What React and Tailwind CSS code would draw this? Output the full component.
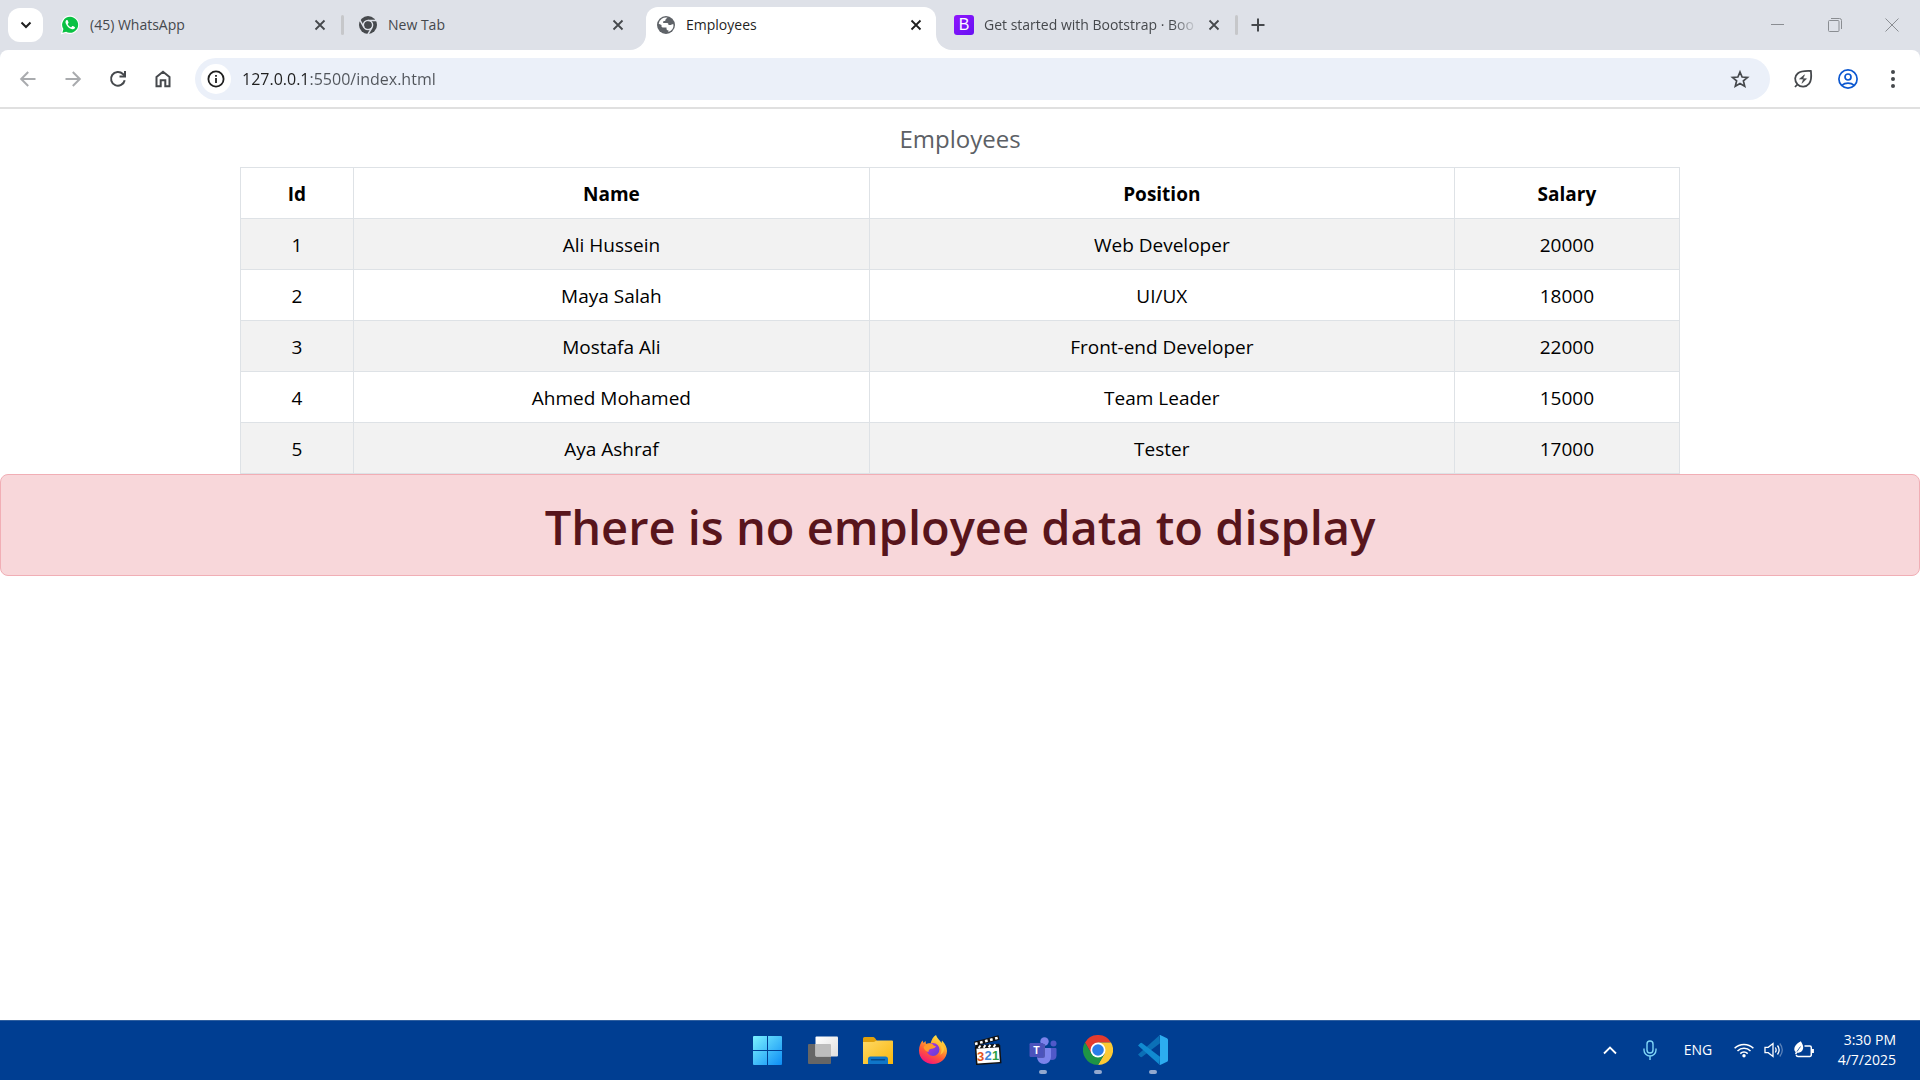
import React from "react";

const employees = [
  { id: 1, name: "Ali Hussein", position: "Web Developer", salary: 20000 },
  { id: 2, name: "Maya Salah", position: "UI/UX", salary: 18000 },
  { id: 3, name: "Mostafa Ali", position: "Front-end Developer", salary: 22000 },
  { id: 4, name: "Ahmed Mohamed", position: "Team Leader", salary: 15000 },
  { id: 5, name: "Aya Ashraf", position: "Tester", salary: 17000 },
];

/* ---------- Tab icons ---------- */

function WhatsAppIcon() {
  return (
    <svg viewBox="0 0 20 20" className="size-5" aria-hidden="true">
      <path d="M10.2 .6a9.2 9.2 0 0 0-8 13.8L.7 19.4l5-1.4A9.2 9.2 0 1 0 10.2 .6z" fill="#fff" />
      <path d="M10.2 1.8a8 8 0 0 0-6.8 12.3l-1 3.6 3.7-1A8 8 0 1 0 10.2 1.8z" fill="#0ac143" />
      <path
        d="M7.6 5.3c-.2-.4-.7-.5-1.1-.2-1 .8-1.3 2-.7 3.4 1 2.6 3 4.600 5.700 5.600 1.400.5 2.700.2 3.300-.8.3-.5.3-1.100-.1-1.300l-1.700-.9c-.4-.2-.7-.1-.9.2l-.6.8c-.2.2-.4.2-.7.1-1.300-.6-2.300-1.500-3-2.800-.1-.3-.1-.5.1-.7l.5-.6c.2-.3.2-.5.1-.8z"
        fill="#fff"
      />
    </svg>
  );
}

function ChromeMonoIcon() {
  return (
    <svg viewBox="0 0 20 20" className="size-5" aria-hidden="true">
      <circle cx="10" cy="10" r="9" fill="#46494d" />
      <circle cx="10" cy="10" r="4.600" fill="none" stroke="#dee1e8" strokeWidth="1.500" />
      <path d="M10 5.400h8.200M6 12.300L1.900 5.200M14 12.300l-4.100 7.100" stroke="#dee1e8" strokeWidth="1.500" fill="none" />
      <circle cx="10" cy="10" r="3.400" fill="#46494d" />
    </svg>
  );
}

function GlobeIcon() {
  return (
    <svg viewBox="0 0 20 20" className="size-5" aria-hidden="true">
      <circle cx="10" cy="10" r="9" fill="#5f6368" />
      <path
        d="M11.500 2.600c-.9 1-2 1.300-2 2.500 0 .9-.8 1.100-1.800 1.200-.9.1-.9 1.200-.2 1.700h3.700c1 0 1.300.9 1.300 1.900h2.300c.9 0 1.200-.9 2.700-.4a7.400 7.400 0 0 1-5.100 7.500v-1.700c-1.300 0-1.900-.6-1.900-1.900v-.9H6.700c-.8 0-1.200-.5-1.200-1.200V10L2.700 8.700A7.400 7.400 0 0 1 11.500 2.600z"
        fill="#fff"
      />
      <path d="M11.800 2.800c.7 2-.2 3.500 1.500 3.700 1.200.1 1 1.400 2.500 1.500l1.100-.5A7.400 7.400 0 0 0 11.800 2.800z" fill="#5f6368" />
    </svg>
  );
}

function BootstrapIcon() {
  return (
    <span
      aria-hidden="true"
      className="flex size-5 items-center justify-center rounded-[3px] bg-linear-to-br from-[#9013fe] to-[#6610f2] font-['Liberation_Sans'] text-base leading-5 text-white"
    >
      B
    </span>
  );
}

function CrossIcon() {
  return (
    <svg viewBox="0 0 12 12" className="size-3" aria-hidden="true">
      <path d="M1.500 1.500l9 9M10.500 1.500l-9 9" stroke="currentColor" strokeWidth="1.800" />
    </svg>
  );
}

/* ---------- Browser chrome ---------- */

function Tab({ icon, title, active, divider }) {
  return (
    <div className="relative flex h-full w-[298px] min-w-0 items-center">
      {active && (
        <div className="absolute inset-x-1 top-[7px] bottom-0 rounded-t-xl bg-white">
          <span className="absolute bottom-0 -left-4 size-4 bg-white">
            <span className="block size-full rounded-br-2xl bg-[#dee1e8]" />
          </span>
          <span className="absolute -right-4 bottom-0 size-4 bg-white">
            <span className="block size-full rounded-bl-2xl bg-[#dee1e8]" />
          </span>
        </div>
      )}
      <div className="relative flex w-full items-center pr-3 pl-[14px]">
        <span className="mr-[10px] shrink-0">{icon}</span>
        <span
          className={
            "min-w-0 flex-1 overflow-hidden whitespace-nowrap text-sm leading-5 " +
            (divider === "fade"
              ? "mask-[linear-gradient(90deg,#000_88%,transparent)] text-[#45484c]"
              : active
                ? "text-[#1f1f1f]"
                : "text-[#45484c]")
          }
        >
          {title}
        </span>
        <button
          type="button"
          aria-label={"Close " + title}
          className={"ml-1 flex size-6 shrink-0 items-center justify-center " + (active ? "text-[#1f1f1f]" : "text-[#45484c]")}
        >
          <CrossIcon />
        </button>
      </div>
      {divider && <span className="absolute top-[15px] right-0 h-5 w-[3px] rounded-full bg-[#c6c7ca]" />}
    </div>
  );
}

function TabStrip() {
  return (
    <div className="flex h-[50px] bg-[#dee1e8]">
      <button
        type="button"
        aria-label="Search tabs"
        className="mt-2 mr-[3px] ml-2 flex h-[34px] w-[35px] shrink-0 items-center justify-center rounded-xl bg-white text-[#1f1f1f]"
      >
        <svg viewBox="0 0 12 8" className="h-2 w-3" aria-hidden="true">
          <path d="M1.500 1.500L6 6l4.500-4.500" fill="none" stroke="currentColor" strokeWidth="2" />
        </svg>
      </button>
      <Tab icon={<WhatsAppIcon />} title="(45) WhatsApp" divider="line" />
      <Tab icon={<ChromeMonoIcon />} title="New Tab" />
      <Tab icon={<GlobeIcon />} title="Employees" active />
      <Tab icon={<BootstrapIcon />} title="Get started with Bootstrap · Boo" divider="fade" />
      <button type="button" aria-label="New tab" className="ml-[6px] flex w-7 shrink-0 items-center justify-center text-[#45484c]">
        <svg viewBox="0 0 14 14" className="size-[14px]" aria-hidden="true">
          <path d="M7 .5v13M.5 7h13" stroke="currentColor" strokeWidth="2" />
        </svg>
      </button>
      <div className="ml-auto flex items-center text-[#8a8d92]">
        <button type="button" aria-label="Minimize" className="flex h-12 w-[57px] items-center justify-center">
          <svg viewBox="0 0 14 14" className="size-[14px]" aria-hidden="true">
            <path d="M0 6.500h13" stroke="currentColor" />
          </svg>
        </button>
        <button type="button" aria-label="Restore" className="flex h-12 w-[57px] items-center justify-center">
          <svg viewBox="0 0 14 14" className="size-[14px]" aria-hidden="true">
            <rect x=".5" y="2.500" width="10.500" height="11" rx="1" fill="none" stroke="currentColor" />
            <path d="M3 .5h8.500a2 2 0 0 1 2 2V11" fill="none" stroke="currentColor" />
          </svg>
        </button>
        <button type="button" aria-label="Close window" className="flex h-12 w-[57px] items-center justify-center">
          <svg viewBox="0 0 14 14" className="size-[14px]" aria-hidden="true">
            <path d="M.5 .5l13 13M13.500 .5l-13 13" stroke="currentColor" />
          </svg>
        </button>
      </div>
    </div>
  );
}

function ToolButton({ label, className = "text-[#45484c]", children }) {
  return (
    <button type="button" aria-label={label} className={"flex h-10 w-[45px] shrink-0 items-center justify-center " + className}>
      <svg viewBox="0 0 20 20" className="size-5" fill="none" stroke="currentColor" strokeWidth="2" aria-hidden="true">
        {children}
      </svg>
    </button>
  );
}

function Toolbar() {
  return (
    <div className="bg-[#dee1e8]">
      <div className="flex h-[57px] items-center rounded-t-lg bg-white px-[5px]">
        <ToolButton label="Back" className="text-[#a9abae]">
          <path d="M17.500 10H4M10.200 3L3.200 10l7 7" />
        </ToolButton>
        <ToolButton label="Forward" className="text-[#a9abae]">
          <path d="M2.500 10H16M9.800 3l7 7-7 7" />
        </ToolButton>
        <ToolButton label="Reload">
          <path d="M16.700 11.300A6.900 6.900 0 1 1 14.900 5l1.600 1.600" />
          <path d="M17 2v5.500h-5.500" />
        </ToolButton>
        <ToolButton label="Home">
          <path d="M3.500 17.300V8L10 2.800 16.500 8v9.300h-4.200v-6H7.700v6z" />
        </ToolButton>
        <div className="mx-[10px] flex h-[42px] min-w-0 flex-1 items-center rounded-full bg-[#ebf0f9] pr-5 pl-[6px]">
          <button
            type="button"
            aria-label="View site information"
            className="mr-[11px] flex size-[30px] shrink-0 items-center justify-center rounded-full bg-white text-[#1f1f1f]"
          >
            <svg viewBox="0 0 18 18" className="size-[18px]" fill="none" stroke="currentColor" strokeWidth="1.800" aria-hidden="true">
              <circle cx="9" cy="9" r="7.600" />
              <path d="M9 8v5M9 5v1.800" />
            </svg>
          </button>
          <input
            type="text"
            aria-label="Address"
            defaultValue="127.0.0.1:5500/index.html"
            className="min-w-0 flex-1 bg-[linear-gradient(90deg,#1f1f1f_67px,#50545a_67px)] bg-clip-text text-base text-transparent outline-none"
          />
          <button type="button" aria-label="Bookmark this tab" className="shrink-0 text-[#45484c]">
            <svg viewBox="0 0 20 20" className="size-5" fill="none" stroke="currentColor" strokeWidth="1.700" aria-hidden="true">
              <path d="M10 3l2.100 5 5.400.4-4.100 3.500 1.300 5.300L10 14.400l-4.700 2.800 1.300-5.300-4.100-3.500 5.400-.4z" />
            </svg>
          </button>
        </div>
        <ToolButton label="Energy saver">
          <path d="M2 18l2.300-2.500M17.900 2c.7 6.200.4 10.300-1.900 12.800a7.600 7.600 0 0 1-11.500.5C1 11.500 1.700 7 4.700 4.500 7.500 2.200 12 1.700 17.900 2z" strokeWidth="1.800" />
          <path d="M11.500 5.800L6.500 10h4l-1.500 4.300 4.500-4.600H9.800z" fill="currentColor" strokeWidth=".6" />
        </ToolButton>
        <ToolButton label="Profile" className="text-[#0b57d0]">
          <circle cx="10" cy="10" r="9.100" strokeWidth="1.700" />
          <circle cx="10" cy="8" r="3" strokeWidth="1.700" />
          <path d="M3.800 16.300c3.500-3 8.900-3 12.400 0" strokeWidth="1.700" />
        </ToolButton>
        <ToolButton label="Menu">
          <g fill="currentColor" stroke="none">
            <circle cx="10" cy="3" r="2" />
            <circle cx="10" cy="10" r="2" />
            <circle cx="10" cy="17" r="2" />
          </g>
        </ToolButton>
      </div>
      <div className="h-0.5 bg-[#e0e0e0]" />
    </div>
  );
}

/* ---------- Page content ---------- */

function EmployeesPage() {
  const cell = "border border-[#dee2e6] px-[10px] pt-[11px] pb-[9px]";
  return (
    <main className="flex-1">
      <div className="mx-auto w-3/4">
        <table className="w-full table-fixed border-collapse text-center text-[19px] leading-[30px] text-black">
          <caption className="pt-[11px] pb-[9px] text-2xl leading-[38px] text-[#5c6065]">Employees</caption>
          <colgroup>
            <col className="w-[7.85%]" />
            <col className="w-[35.85%]" />
            <col className="w-[40.65%]" />
            <col className="w-[15.65%]" />
          </colgroup>
          <thead>
            <tr className="font-bold">
              <th scope="col" className={cell}>Id</th>
              <th scope="col" className={cell}>Name</th>
              <th scope="col" className={cell}>Position</th>
              <th scope="col" className={cell}>Salary</th>
            </tr>
          </thead>
          <tbody>
            {employees.map((e) => (
              <tr key={e.id} className="odd:bg-[#f2f2f2]">
                <td className={cell}>{e.id}</td>
                <td className={cell}>{e.name}</td>
                <td className={cell}>{e.position}</td>
                <td className={cell}>{e.salary}</td>
              </tr>
            ))}
          </tbody>
        </table>
      </div>
      <div role="alert" className="rounded-lg border border-[#f1aeb5] bg-[#f8d7da] px-5 pt-[22px] pb-[18px] text-center">
        <h1 className="text-[47px] leading-[60px] font-semibold text-[#58151c]">There is no employee data to display</h1>
      </div>
    </main>
  );
}

/* ---------- Taskbar ---------- */

function AppButton({ label, running, children }) {
  return (
    <button type="button" aria-label={label} className="relative flex h-[60px] w-[55px] items-center justify-center">
      <svg viewBox="0 0 30 30" className="size-[30px]" aria-hidden="true">
        {children}
      </svg>
      {running && <span className="absolute bottom-[6px] h-1 w-2 rounded-full bg-[#93a9cf]" />}
    </button>
  );
}

function Taskbar() {
  return (
    <footer className="grid h-[60px] grid-cols-[1fr_auto_1fr] items-center bg-[#003e92] text-white shadow-[inset_0_1px_0_#2f5f9f]">
      <div />
      <nav aria-label="Apps" className="flex">
        <AppButton label="Start">
          <defs>
            <linearGradient id="win" gradientUnits="userSpaceOnUse" x1="0" y1="0" x2="30" y2="30">
              <stop offset="0" stopColor="#7df3ff" />
              <stop offset="1" stopColor="#0a8bf5" />
            </linearGradient>
          </defs>
          <path d="M0 2a1 1 0 0 1 1-1h13v14H0zM15 1h13a1 1 0 0 1 1 1v13H15zM0 16h14v14H1a1 1 0 0 1-1-1zM15 16h14v13a1 1 0 0 1-1 1H15z" fill="url(#win)" />
        </AppButton>
        <AppButton label="Task view">
          <defs>
            <linearGradient id="tvw" x1="0" y1="0" x2="1" y2="1">
              <stop offset="0" stopColor="#fff" />
              <stop offset="1" stopColor="#dedede" />
            </linearGradient>
          </defs>
          <rect x="0" y="9" width="23" height="20" rx="1" fill="#666" />
          <rect x="7.500" y="1.500" width="22.500" height="20" rx="1" fill="url(#tvw)" />
          <path d="M7.500 9H22a1 1 0 0 1 1 1v11.500H8.500a1 1 0 0 1-1-1z" fill="#bdbdbd" />
        </AppButton>
        <AppButton label="File Explorer">
          <defs>
            <linearGradient id="fold" x1="0" y1="0" x2="1" y2="1">
              <stop offset="0" stopColor="#ffd965" />
              <stop offset="1" stopColor="#f8b70d" />
            </linearGradient>
          </defs>
          <path d="M0 3.500A1.500 1.500 0 0 1 1.500 2h8.300c1 0 1.700.5 2.500 1.500L14 6v4H0z" fill="#dfa00c" />
          <path d="M0 7h10.500c1.500 0 2-1.500 3.500-1.500h15a1 1 0 0 1 1 1V29H0z" fill="url(#fold)" />
          <path d="M5 29v-5a2.500 2.500 0 0 1 2.500-2.500h15A2.500 2.500 0 0 1 25 24v5z" fill="#0f76c9" />
          <path d="M8.500 24.800h13" stroke="#07498a" strokeWidth="1.500" strokeLinecap="round" />
        </AppButton>
        <AppButton label="Firefox">
          <defs>
            <linearGradient id="fx" x1=".8" y1="0" x2=".3" y2="1">
              <stop offset="0" stopColor="#fff04a" />
              <stop offset=".35" stopColor="#ffb02e" />
              <stop offset=".65" stopColor="#ff5a36" />
              <stop offset="1" stopColor="#f5127e" />
            </linearGradient>
            <linearGradient id="fxg" x1="0" y1="0" x2="1" y2="1">
              <stop offset="0" stopColor="#b833e1" />
              <stop offset="1" stopColor="#5b3fd6" />
            </linearGradient>
          </defs>
          <path d="M18 0c1 3.500 4 5 5.500 8l.5-2.500c3.500 3.500 5 7.500 5 10.500C29 23 22.800 29 15 29S1 23.500 1 15.500C1 11.500 2.500 8 4.500 5.500L5.500 8 7.500 6l.5 3c1.500-.7 3-1 4.500-.5C13.500 5 15 1.500 18 0z" fill="url(#fx)" />
          <circle cx="15" cy="14.500" r="6.500" fill="url(#fxg)" />
          <path d="M5.500 12c2-3 5.500-4 9-3 .7 1.500 1.800 2 3.500 2-1 2.500-3.500 2.500-5.500 3-1.500.4-2 1.500-2 3-2-.5-4.500-2-5-5z" fill="#ff9a2b" />
          <path d="M17 7.500c3 0 6.500 2.500 6.500 7.500 0 2-.6 3.500-1.500 4.800 2.500-1 4.300-3.500 4.300-7-1.800-3-5-5.500-9.300-5.300z" fill="#ffc43a" />
        </AppButton>
        <AppButton label="Media Player Classic">
          <g transform="rotate(-4 15 18)">
            <rect x="3" y="11.500" width="24" height="17" fill="#fff" stroke="#111" strokeWidth="1.500" />
            <rect x="3" y="9.500" width="24" height="3.500" fill="#111" />
            <path d="M6 12.500l2-2.500M11 12.500l2-2.500M16 12.500l2-2.500M21 12.500l2-2.500" stroke="#fff" strokeWidth="2" />
          </g>
          <path d="M1.500 9L26 2.500" stroke="#111" strokeWidth="4.500" />
          <path d="M2 9L26 2.500" stroke="#fff" strokeWidth="2.500" strokeDasharray="2.700 2.500" />
          <g fontFamily="Liberation Sans, sans-serif" fontWeight="700" fontSize="13">
            <text x="4" y="25.500" fill="#e4541b">3</text>
            <text x="11.500" y="25" fill="#3e87d8">2</text>
            <text x="19" y="24.500" fill="#2ea043">1</text>
          </g>
        </AppButton>
        <AppButton label="Microsoft Teams" running>
          <circle cx="25.500" cy="8.500" r="3" fill="#5059c9" />
          <path d="M20 13h7.500a1 1 0 0 1 1 1v6.500c0 3-2 4.500-4.500 4.500s-4-1.500-4-4z" fill="#5059c9" />
          <circle cx="16.500" cy="6.500" r="4.200" fill="#7b83eb" />
          <path d="M10 13h12a1 1 0 0 1 1 1v7.500c0 4.500-3 7.500-7 7.500s-7-3-7-7.500V14a1 1 0 0 1 1-1z" fill="#7b83eb" />
          <path d="M14 9h3v12a2 2 0 0 1-2 2H9z" fill="#5158b5" />
          <rect x="1.500" y="8" width="14" height="14" rx="1.200" fill="#4b53bc" />
          <text x="8.500" y="18.600" textAnchor="middle" fontFamily="Liberation Sans, sans-serif" fontWeight="700" fontSize="10.500" fill="#fff">T</text>
        </AppButton>
        <AppButton label="Google Chrome" running>
          <path d="M2 7.500A15 15 0 0 1 28 7.500H15L8.500 18.800z" fill="#e33b2e" />
          <path d="M28 7.500A15 15 0 0 1 15 30l6.500-11.300L15 7.500z" fill="#fcc934" />
          <path d="M2 7.500A15 15 0 0 0 15 30l6.500-11.200h-13z" fill="#1e9446" />
          <circle cx="15" cy="15" r="7.500" fill="#fff" />
          <circle cx="15" cy="15" r="5.800" fill="#2a7de9" />
        </AppButton>
        <AppButton label="Visual Studio Code" running>
          <path d="M21.500 .3L0 19.500l2.200 2.200a1.500 1.500 0 0 0 2 0L22 8.200z" fill="#0b6fb6" />
          <path d="M21.500 29.700L0 10.500l2.200-2.200a1.500 1.500 0 0 1 2 0L22 21.800z" fill="#118ad0" />
          <path d="M21.500 .3c.3-.3.8-.3 1.200-.1l6.300 3c.6.3 1 .9 1 1.600v20.400c0 .7-.4 1.300-1 1.600l-6.300 3c-.4.2-.9.2-1.200-.1.300-.3.500-.7.500-1.200v-27c0-.5-.2-.9-.5-1.200z" fill="#2cacf0" />
        </AppButton>
      </nav>
      <div className="flex items-center justify-end pr-6">
        <button type="button" aria-label="Show hidden icons" className="flex w-10 justify-center">
          <svg viewBox="0 0 14 9" className="h-[9px] w-[14px]" aria-hidden="true">
            <path d="M1 7.500l6-6 6 6" fill="none" stroke="currentColor" strokeWidth="1.800" />
          </svg>
        </button>
        <button type="button" aria-label="Microphone" className="flex w-10 justify-center text-[#7fd6f7]">
          <svg viewBox="0 0 14 20" className="h-5 w-[14px]" fill="none" stroke="currentColor" strokeWidth="1.400" aria-hidden="true">
            <rect x="4" y="1" width="6" height="12" rx="3" />
            <path d="M1 8.500V10a6 6 0 0 0 12 0V8.500M7 16v4" />
          </svg>
        </button>
        <button type="button" className="w-14 text-center text-sm">ENG</button>
        <button type="button" aria-label="Network, volume and battery" className="ml-2 flex items-center gap-[10px]">
          <svg viewBox="0 0 20 16" className="h-4 w-5" fill="none" stroke="currentColor" strokeWidth="1.500" aria-hidden="true">
            <path d="M.6 6.300a13.300 13.300 0 0 1 18.800 0M3.500 9a9.300 9.300 0 0 1 13 0M6.300 11.600a5.300 5.300 0 0 1 7.400 0" />
            <circle cx="10" cy="13.800" r="1.700" fill="currentColor" stroke="none" />
          </svg>
          <svg viewBox="0 0 20 18" className="h-[18px] w-5" fill="none" stroke="currentColor" strokeWidth="1.300" aria-hidden="true">
            <path d="M1 6.300h3.200L9 2.500v13L4.200 11.700H1z" />
            <path d="M11.300 6.500q1.700 2.500 0 5M13.500 4.500q3.300 4.500 0 9" />
            <path d="M15.800 2.500q5 6.500 0 13" opacity=".35" />
          </svg>
          <svg viewBox="0 0 20 18" className="h-[18px] w-5" aria-hidden="true">
            <path d="M10.500 5h5.300a1.500 1.500 0 0 1 1.500 1.500V14a1.500 1.500 0 0 1-1.500 1.500H4A2 2 0 0 1 2.200 14" fill="none" stroke="currentColor" strokeWidth="1.500" />
            <path d="M18.900 8v4" stroke="currentColor" strokeWidth="2" />
            <path d="M6.800 .2C2.500 2.500.3 5 .3 8c0 1.400.5 2.400 1.400 3L1 13l1.300.4.900-1.700c3.700.2 6-2 6-5.500C9.200 4 8 2.200 6.800 .2z" fill="currentColor" />
            <path d="M3 10.500L6.500 5.500" stroke="#003e92" strokeWidth=".8" />
          </svg>
        </button>
        <div className="ml-5 flex flex-col items-end text-sm leading-5 whitespace-nowrap">
          <span>3:30 PM</span>
          <span className="w-[62px] text-right">4/7/2025</span>
        </div>
      </div>
    </footer>
  );
}

export default function App() {
  return (
    <div className="flex min-h-screen flex-col bg-white font-['Open_Sans','Noto_Sans',sans-serif]">
      <header>
        <TabStrip />
        <Toolbar />
      </header>
      <EmployeesPage />
      <Taskbar />
    </div>
  );
}
